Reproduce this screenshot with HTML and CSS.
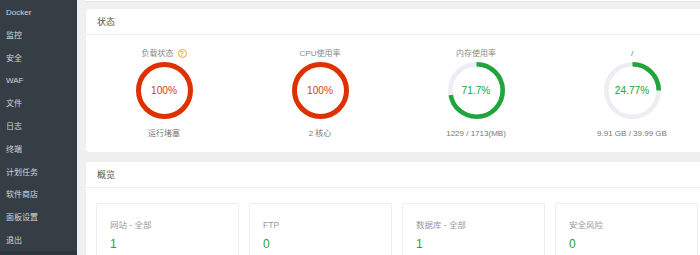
FILE: index.html
```html
<!DOCTYPE html>
<html lang="zh-CN">
<head>
<meta charset="utf-8">
<link rel="stylesheet" href="styles.css">
</head>
<body>
<div class="layout">
  <aside class="sidebar">
    <ul class="menu">
      <li>Docker</li>
      <li>监控</li>
      <li>安全</li>
      <li>WAF</li>
      <li>文件</li>
      <li>日志</li>
      <li>终端</li>
      <li>计划任务</li>
      <li>软件商店</li>
      <li>面板设置</li>
      <li>退出</li>
    </ul>
    <div class="menu-foot"></div>
  </aside>
  <main class="main">
    <div class="top-strip"></div>
    <section class="card">
      <div class="card-head">状态</div>
      <div class="status-body">
        <div class="gauge">
          <div class="gauge-title">负载状态 <span class="help">?</span></div>
          <div class="ring">
            <svg viewBox="0 0 57 57" width="57" height="57">
              <circle class="track" cx="28.5" cy="28.5" r="26"/>
              <circle class="arc red" cx="28.5" cy="28.5" r="26" stroke-dasharray="163.4 163.4" transform="rotate(-90 28.5 28.5)"/>
            </svg>
            <span class="ring-val red-text">100%</span>
          </div>
          <div class="gauge-sub">运行堵塞</div>
        </div>
        <div class="gauge">
          <div class="gauge-title">CPU使用率</div>
          <div class="ring">
            <svg viewBox="0 0 57 57" width="57" height="57">
              <circle class="track" cx="28.5" cy="28.5" r="26"/>
              <circle class="arc red" cx="28.5" cy="28.5" r="26" stroke-dasharray="163.4 163.4" transform="rotate(-90 28.5 28.5)"/>
            </svg>
            <span class="ring-val red-text">100%</span>
          </div>
          <div class="gauge-sub">2 核心</div>
        </div>
        <div class="gauge">
          <div class="gauge-title">内存使用率</div>
          <div class="ring">
            <svg viewBox="0 0 57 57" width="57" height="57">
              <circle class="track" cx="28.5" cy="28.5" r="26.2"/>
              <circle class="arc green" cx="28.5" cy="28.5" r="26.2" stroke-dasharray="118.0 164.6" transform="rotate(-90 28.5 28.5)"/>
            </svg>
            <span class="ring-val green-text">71.7%</span>
          </div>
          <div class="gauge-sub">1229 / 1713(MB)</div>
        </div>
        <div class="gauge">
          <div class="gauge-title green-text">/</div>
          <div class="ring">
            <svg viewBox="0 0 57 57" width="57" height="57">
              <circle class="track" cx="28.5" cy="28.5" r="26.2"/>
              <circle class="arc green" cx="28.5" cy="28.5" r="26.2" stroke-dasharray="40.8 164.6" transform="rotate(-90 28.5 28.5)"/>
            </svg>
            <span class="ring-val green-text">24.77%</span>
          </div>
          <div class="gauge-sub">9.91 GB / 39.99 GB</div>
        </div>
      </div>
    </section>
    <section class="card">
      <div class="card-head">概览</div>
      <div class="overview-body">
        <div class="stat">
          <div class="stat-label">网站 - 全部</div>
          <div class="stat-num">1</div>
        </div>
        <div class="stat">
          <div class="stat-label">FTP</div>
          <div class="stat-num">0</div>
        </div>
        <div class="stat">
          <div class="stat-label">数据库 - 全部</div>
          <div class="stat-num">1</div>
        </div>
        <div class="stat">
          <div class="stat-label">安全风险</div>
          <div class="stat-num">0</div>
        </div>
      </div>
    </section>
  </main>
</div>
</body>
</html>
```

FILE: styles.css
```css
* { box-sizing: border-box; }
html, body {
  margin: 0;
  padding: 0;
  width: 700px;
  height: 255px;
  overflow: hidden;
  background: #f0f0f0;
  font-family: "Liberation Sans", "Noto Sans CJK SC", sans-serif;
}
.layout {
  display: flex;
  height: 255px;
  overflow: hidden;
}
.sidebar {
  width: 77px;
  flex-shrink: 0;
  background: #363e45;
  display: flex;
  flex-direction: column;
}
.menu {
  list-style: none;
  margin: 0;
  padding: 0;
  flex-shrink: 0;
}
.menu li {
  height: 22.8px;
  line-height: 26px;
  padding-left: 6px;
  color: #d2d6da;
  font-size: 8px;
}
.menu-foot {
  flex: 1;
  background: #2e353c;
}
.main {
  flex-shrink: 0;
  width: 660px;
  padding-left: 9px;
  display: flex;
  flex-direction: column;
}
.top-strip {
  flex-shrink: 0;
  height: 2px;
  background: #fff;
  border-bottom: 1px solid #e6e6e6;
  margin-bottom: 7px;
}
.card {
  flex-shrink: 0;
  background: #fff;
  border-radius: 3px;
  width: 640px;
  margin-bottom: 10px;
  box-shadow: 0 0 1px rgba(0,0,0,0.06);
}
.card-head {
  height: 26px;
  line-height: 27px;
  padding-left: 11px;
  font-size: 9px;
  color: #555;
  border-bottom: 1px solid #eeeeee;
}
.status-body {
  display: flex;
  padding: 13px 0 13px 0;
}
.gauge {
  width: 156px;
  display: flex;
  flex-direction: column;
  align-items: center;
}
.gauge-title {
  height: 11px;
  line-height: 11px;
  font-size: 8px;
  color: #888;
  display: flex;
  align-items: center;
  gap: 4px;
}
.help {
  width: 9px;
  height: 9px;
  border: 1px solid #f0a63a;
  border-radius: 50%;
  color: #f0a63a;
  font-size: 7px;
  line-height: 7px;
  text-align: center;
  font-weight: bold;
}
.ring {
  position: relative;
  width: 57px;
  height: 57px;
  margin-top: 3px;
}
.ring svg { display: block; }
.track {
  fill: none;
  stroke: #eceef4;
  stroke-width: 4.6;
}
.arc {
  fill: none;
  stroke-width: 4.6;
}
.arc.red { stroke: #dd3100; stroke-width: 5; }
.arc.green { stroke: #20a53a; }
.ring-val {
  position: absolute;
  left: 0;
  right: 0;
  top: 0;
  bottom: 0;
  display: flex;
  align-items: center;
  justify-content: center;
  font-size: 10.2px;
}
.red-text { color: #d5401c; }
.green-text { color: #20a53a; }
.gauge-sub {
  margin-top: 9px;
  height: 11px;
  line-height: 11px;
  font-size: 8px;
  color: #777;
}
.overview-body {
  display: flex;
  gap: 10px;
  padding: 15px 0 0 10px;
}
.stat {
  width: 143px;
  height: 70px;
  border: 1px solid #eeeeee;
  border-radius: 2px;
  padding: 16px 0 0 13px;
}
.stat-label {
  font-size: 8.5px;
  line-height: 11px;
  color: #999;
}
.stat-num {
  margin-top: 6px;
  font-size: 12px;
  line-height: 14px;
  color: #20a53a;
}
```
